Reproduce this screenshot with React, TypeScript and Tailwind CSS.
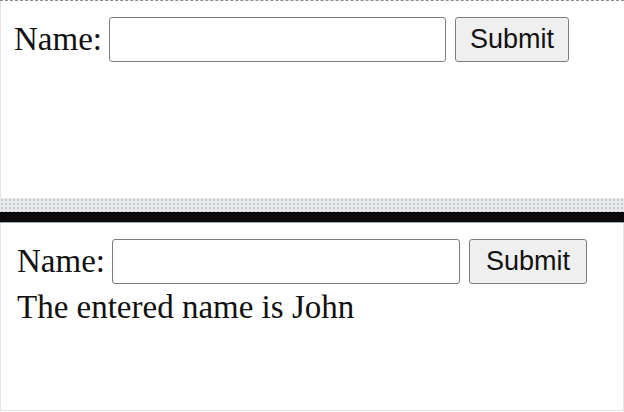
import { useState } from 'react'

const serif = "font-['Liberation_Serif','Times_New_Roman',serif]"
const sans = "font-['Liberation_Sans',Arial,sans-serif]"

function NameForm({ inputW, btnW, pl, showResult }: { inputW: string; btnW: string; pl: string; showResult?: boolean }) {
  const [name, setName] = useState('')
  return (
    <div className={`${pl} pt-4 ${serif} text-[33px] leading-[37px] text-[#111]`}>
      <div className="flex items-center">
        <span className="mr-[7px]">Name:</span>
        <input
          value={name}
          onChange={e => setName(e.target.value)}
          className={`${inputW} h-[45px] rounded-[3px] border border-[#7a7d84] bg-white px-1 outline-none`}
        />
        <button
          className={`${btnW} ml-[9px] h-[45px] rounded-[3px] border border-[#7a7d84] bg-[#efefef] ${sans} text-[27px] text-[#111]`}
        >
          Submit
        </button>
      </div>
      {showResult && <div className="mt-[5px]">The entered name is John</div>}
    </div>
  )
}

export default function App() {
  return (
    <div className="w-[624px] h-[412px] bg-white">
      {/* 上半部分 */}
      <div className="h-px border-t border-dashed border-[#8e8a94]" />
      <div className="h-[197px] border-l border-[#e4e4e4]">
        <NameForm inputW="w-[337px]" btnW="w-[114px]" pl="pl-[13px]" />
      </div>

      {/* 分隔条 */}
      <div className="h-[14px] bg-[#e9e9e9] bg-[radial-gradient(circle,#c3cad6_0.8px,transparent_1px)] bg-[size:4px_4px]" />
      <div className="h-[10px] bg-[#0b0a0c]" />
      <div className="h-px bg-[#9ea8bc]" />

      {/* 下半部分 */}
      <div className="h-[188px] border-x border-b border-[#e4e4e4]">
        <NameForm inputW="w-[348px]" btnW="w-[118px]" pl="pl-[16px]" showResult />
      </div>
    </div>
  )
}
